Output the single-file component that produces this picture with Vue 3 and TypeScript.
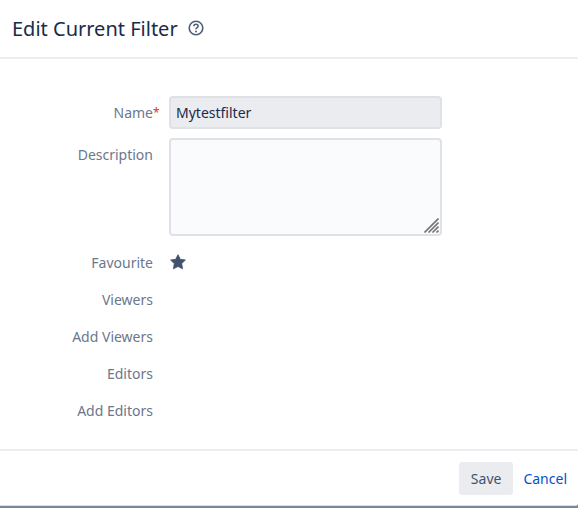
<script setup lang="ts">
import { ref } from 'vue'

const name = ref('Mytestfilter')
const description = ref('')
const favourite = ref(true)
const shareRows: string[] = ['Viewers', 'Add Viewers', 'Editors', 'Add Editors']
</script>

<template>
  <form class="dialog" @submit.prevent>
    <header class="header">
      <h1 class="title">Edit Current Filter</h1>
      <a class="help" href="#" aria-label="Help">
        <svg viewBox="0 0 16 16" width="16" height="16" fill="none">
          <circle cx="8" cy="8" r="6.8" stroke="currentColor" stroke-width="1.6" />
          <path d="M5.9 6.3C5.9 5 6.8 4.3 8 4.3s2.1.8 2.1 1.9c0 1.5-2.1 1.5-2.1 3.1" stroke="currentColor" stroke-width="1.6" />
          <circle cx="8" cy="11.4" r="1" fill="currentColor" />
        </svg>
      </a>
    </header>

    <div class="body">
      <div class="row">
        <label class="label" for="filter-name">Name<span class="required">*</span></label>
        <input id="filter-name" v-model="name" class="field" type="text" />
      </div>
      <div class="row row-description">
        <label class="label" for="filter-description">Description</label>
        <div class="area">
          <textarea id="filter-description" v-model="description" class="field textarea"></textarea>
          <svg class="grip" viewBox="0 0 15 15" width="15" height="15" aria-hidden="true">
            <path d="M0.5 14.5L14.5 0.5M4.5 14.5L14.5 4.5M8.5 14.5L14.5 8.5M12.5 14.5L14.5 12.5" stroke="#777" stroke-width="1.7" />
          </svg>
        </div>
      </div>
      <div class="row">
        <span id="favourite-label" class="label">Favourite</span>
        <button class="star" type="button" aria-labelledby="favourite-label" :aria-pressed="favourite" @click="favourite = !favourite">
          <svg viewBox="0 0 16 16" width="16" height="16">
            <path
              d="M8 0.7L10.3 5.3 15.4 6 11.7 9.6 12.6 14.8 8 12.5 3.4 14.8 4.3 9.6 0.6 6 5.7 5.3Z"
              :fill="favourite ? 'currentColor' : 'none'"
              stroke="currentColor"
              stroke-width="0.8"
              stroke-linejoin="round"
            />
          </svg>
        </button>
      </div>
      <div v-for="row in shareRows" :key="row" class="row">
        <span class="label">{{ row }}</span>
      </div>
    </div>

    <footer class="footer">
      <button class="save" type="submit">Save</button>
      <a class="cancel" href="#">Cancel</a>
    </footer>
  </form>
</template>

<style>
body {
  background: #7a869a;
}
</style>

<style scoped>
.dialog,
.dialog * {
  box-sizing: border-box;
}
.dialog {
  background: #fff;
  border-bottom: 1px solid #dfe1e6;
  border-radius: 0 0 3px 0;
  color: #172b4d;
  font-family: 'Noto Sans', 'Open Sans', sans-serif;
  font-size: 14px;
  line-height: 20px;
}
.header {
  display: flex;
  align-items: center;
  gap: 10px;
  padding: 14px 12px 13px;
  border-bottom: 2px solid #ebecf0;
}
.title {
  margin: 0;
  font-size: 20px;
  font-weight: 400;
  line-height: 30px;
}
.help {
  display: flex;
  color: #505f79;
  padding-bottom: 3px;
}
.body {
  display: flex;
  flex-direction: column;
  gap: 9px;
  padding: 37px 12px 27px;
}
.row {
  display: flex;
  gap: 16px;
}
.row-description {
  padding-bottom: 1px;
}
.label {
  position: relative;
  flex: none;
  width: 141px;
  padding: 7px 0 1px;
  color: #6b778c;
  text-align: right;
}
.required {
  position: absolute;
  left: 100%;
  color: #de350b;
  font-size: 12px;
}
.field {
  display: block;
  width: 273px;
  max-width: 100%;
  height: 33px;
  margin: 0;
  padding: 4px 5px;
  border: 2px solid #dfe1e6;
  border-radius: 4px;
  background: #ebecf0;
  color: #172b4d;
  font: inherit;
  outline: none;
}
.area {
  position: relative;
}
.textarea {
  height: 98px;
  background: #fafbfc;
  resize: none;
}
.grip {
  position: absolute;
  right: 3px;
  bottom: 3px;
}
.star {
  display: flex;
  align-items: center;
  padding: 3px 1px 0;
  border: 0;
  background: none;
  color: #42526e;
}
.footer {
  display: flex;
  justify-content: flex-end;
  align-items: center;
  gap: 10px;
  padding: 11px 11px 10px;
  border-top: 2px solid #ebecf0;
}
.save {
  height: 33px;
  padding: 0 12px;
  border: 0;
  border-radius: 3px;
  background: #ebecf0;
  color: #42526e;
  font: inherit;
}
.cancel {
  color: #0052cc;
  text-decoration: none;
}
</style>
